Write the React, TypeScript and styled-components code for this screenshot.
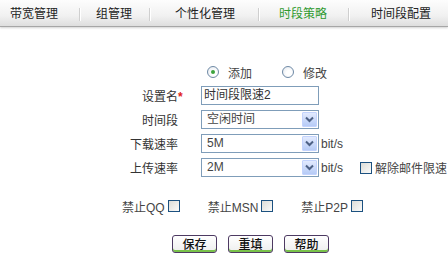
import { Fragment } from 'react';
import { createGlobalStyle, styled } from 'styled-components';

const Global = createGlobalStyle`
  body {
    margin: 0;
    background: #fff;
    font-family: 'Liberation Sans', 'Noto Sans CJK SC', sans-serif;
    font-size: 12px;
    color: #333;
  }
`;

const Bar = styled.div`
  display: flex;
  height: 26px;
  background: linear-gradient(#fdfdfd, #f1f1f1 60%, #dedede);
  border-bottom: 1px solid #a6a6a6;
  box-shadow: 0 1px 2px rgba(0, 0, 0, 0.18);
`;

const Tab = styled.div<{ $w?: number; $pl: number; $active?: boolean }>`
  display: flex;
  align-items: center;
  box-sizing: border-box;
  width: ${(p) => (p.$w ? `${p.$w}px` : 'auto')};
  padding-left: ${(p) => p.$pl}px;
  color: ${(p) => (p.$active ? '#2f9a2f' : '#222')};
  font-family: 'Noto Sans CJK SC', sans-serif;
  font-size: 12px;
  line-height: 26px;
`;

const Sep = styled.span`
  width: 1px;
  height: 13px;
  margin-top: 8px;
  background: #cfcfcf;
  box-shadow: 1px 0 0 #fff;
`;

const Form = styled.div`
  padding-top: 36px;
`;

const Fields = styled.div`
  display: flex;
  flex-direction: column;
  gap: 5px;
  padding-left: 130px;
`;

const RadioRow = styled.div`
  display: flex;
  align-items: center;
  height: 18px;
  padding-left: 77px;
  color: #444;
`;

const RadioLabel = styled.label`
  display: flex;
  align-items: center;
  gap: 9px;
  margin-right: 30px;
`;

const RadioDot = styled.span<{ $on?: boolean }>`
  display: inline-flex;
  align-items: center;
  justify-content: center;
  box-sizing: border-box;
  width: 12px;
  height: 12px;
  border-radius: 50%;
  border: 1px solid #6f8aa6;
  background: radial-gradient(circle at 60% 60%, #fff 30%, #dfe5ec);
  &::after {
    content: '';
    display: ${(p) => (p.$on ? 'block' : 'none')};
    width: 4px;
    height: 4px;
    border-radius: 50%;
    background: #3da33d;
  }
`;

const Row = styled.div`
  display: flex;
  align-items: center;
  height: 19px;
`;

const Label = styled.span<{ $indent: number }>`
  box-sizing: border-box;
  width: 71px;
  padding-left: ${(p) => p.$indent}px;
  color: #333;
`;

const Star = styled.span`
  color: #e0201c;
  font-weight: bold;
`;

const Input = styled.div`
  box-sizing: border-box;
  width: 118px;
  height: 19px;
  border: 1px solid #7f9db9;
  padding-left: 2px;
  line-height: 17px;
  color: #333;
  background: #fff;
`;

const Select = styled.div`
  display: flex;
  box-sizing: border-box;
  width: 118px;
  height: 19px;
  border: 1px solid #7f9db9;
  padding: 1px;
  background: #fff;
`;

const SelectValue = styled.span`
  flex: 1;
  padding-left: 4px;
  line-height: 15px;
  color: #444;
`;

const ArrowBtn = styled.span`
  display: flex;
  align-items: center;
  justify-content: center;
  width: 15px;
  height: 15px;
  border: 1px solid #c3d3fd;
  box-sizing: border-box;
  background: linear-gradient(#e2eafe, #b6cbf6);
  border-radius: 1px;
`;

const Unit = styled.span`
  margin-left: 2px;
  color: #444;
`;

const Check = styled.span`
  display: inline-block;
  box-sizing: border-box;
  width: 12px;
  height: 12px;
  border: 1px solid #1c5180;
  background: linear-gradient(135deg, #dcdcd7, #fbfbfa);
`;

const CheckItem = styled.label<{ $ml?: number }>`
  display: flex;
  align-items: center;
  gap: 3px;
  margin-left: ${(p) => p.$ml ?? 0}px;
  color: #444;
`;

const Checks = styled.div`
  display: flex;
  align-items: center;
  gap: 28px;
  height: 14px;
  margin-top: 22px;
  padding-left: 122px;
`;

const Buttons = styled.div`
  display: flex;
  gap: 11px;
  margin-top: 22px;
  padding-left: 172px;
`;

const Button = styled.button`
  box-sizing: border-box;
  width: 45px;
  height: 18px;
  padding: 0;
  border: 1px solid #4d3a62;
  border-radius: 3px;
  background: linear-gradient(#ffffff, #eeeeee);
  box-shadow: inset 0 -2px 0 #79c24a;
  font-family: 'Noto Sans CJK SC', sans-serif;
  font-size: 12px;
  font-weight: 500;
  line-height: 14px;
  color: #111;
`;

function Arrow() {
  return (
    <ArrowBtn>
      <svg width="9" height="7" viewBox="0 0 9 7">
        <path d="M1 1.5 L4.5 5 L8 1.5" fill="none" stroke="#4d6185" strokeWidth="2" />
      </svg>
    </ArrowBtn>
  );
}

function Dropdown({ value }: { value: string }) {
  return (
    <Select>
      <SelectValue>{value}</SelectValue>
      <Arrow />
    </Select>
  );
}

const tabs = [
  { text: '带宽管理', w: 80, pl: 10 },
  { text: '组管理', w: 70, pl: 16 },
  { text: '个性化管理', w: 109, pl: 25 },
  { text: '时段策略', w: 90, pl: 20, active: true },
  { text: '时间段配置', pl: 22 },
];

export default function App() {
  return (
    <>
      <Global />
      <Bar>
        {tabs.map((t, i) => (
          <Fragment key={t.text}>
            <Tab $w={t.w ? t.w - 1 : undefined} $pl={t.pl} $active={t.active}>
              {t.text}
            </Tab>
            {i < tabs.length - 1 && <Sep />}
          </Fragment>
        ))}
      </Bar>
      <Form>
        <Fields>
          <RadioRow>
            <RadioLabel>
              <RadioDot $on />
              添加
            </RadioLabel>
            <RadioLabel>
              <RadioDot />
              修改
            </RadioLabel>
          </RadioRow>
          <Row>
            <Label $indent={12}>
              设置名<Star>*</Star>
            </Label>
            <Input>时间段限速2</Input>
          </Row>
          <Row>
            <Label $indent={12}>时间段</Label>
            <Dropdown value="空闲时间" />
          </Row>
          <Row>
            <Label $indent={0}>下载速率</Label>
            <Dropdown value="5M" />
            <Unit>bit/s</Unit>
          </Row>
          <Row>
            <Label $indent={0}>上传速率</Label>
            <Dropdown value="2M" />
            <Unit>bit/s</Unit>
            <CheckItem $ml={17}>
              <Check />
              解除邮件限速
            </CheckItem>
          </Row>
        </Fields>
        <Checks>
          <CheckItem>
            禁止QQ<Check />
          </CheckItem>
          <CheckItem>
            禁止MSN<Check />
          </CheckItem>
          <CheckItem>
            禁止P2P<Check />
          </CheckItem>
        </Checks>
        <Buttons>
          <Button>保存</Button>
          <Button>重填</Button>
          <Button>帮助</Button>
        </Buttons>
      </Form>
    </>
  );
}
